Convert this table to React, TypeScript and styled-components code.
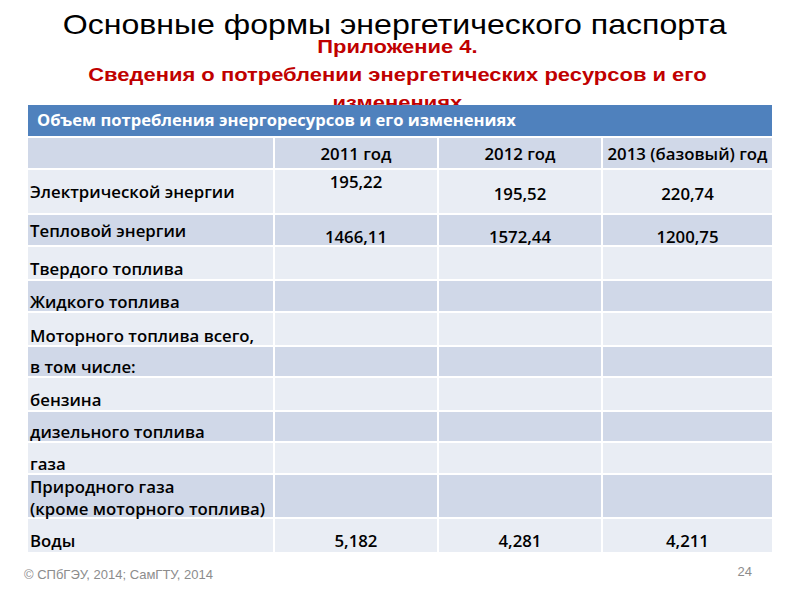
import styled, { createGlobalStyle } from 'styled-components';

const GlobalStyle = createGlobalStyle`
  html, body {
    margin: 0;
    padding: 0;
    background: #ffffff;
  }
`;

const Slide = styled.div`
  width: 800px;
  height: 600px;
  overflow: hidden;
  display: flex;
  flex-direction: column;
  background: #ffffff;
  font-family: 'Liberation Sans', Arial, sans-serif;
`;

const Heading = styled.div`
  box-sizing: border-box;
  height: 105px;
  padding-top: 9px;
  display: flex;
  flex-direction: column;
  align-items: center;
`;

const Title = styled.h1`
  margin: 0 11px 0 0;
  font-size: 28px;
  line-height: 32px;
  font-weight: 400;
  color: #000000;
  white-space: nowrap;
  transform: scaleX(1.146);
`;

const Subtitle = styled.div`
  margin: -8px 5px 0 0;
  font-size: 18px;
  line-height: 28px;
  font-weight: 700;
  color: #c00000;
  text-align: center;
  white-space: nowrap;
  transform: scaleX(1.22);
`;

const Table = styled.div`
  position: relative;
  z-index: 1;
  margin-left: 28px;
  width: 744px;
  display: grid;
  grid-template-columns: 245px 162px 162px 169px;
  gap: 2px;
  font-family: 'Open Sans', 'Noto Sans', sans-serif;
  font-weight: 600;
  font-size: 16.8px;
  line-height: 22px;
  color: #000000;
`;

const HeaderCell = styled.div`
  grid-column: 1 / -1;
  box-sizing: border-box;
  height: 31px;
  padding: 4px 9px 0;
  background: #4f81bd;
  color: #ffffff;
  font-weight: 700;
  font-size: 16.6px;
  white-space: nowrap;
`;

const Cell = styled.div<{ $h: number; $top: number; $dark: boolean; $first?: boolean }>`
  box-sizing: border-box;
  height: ${(p) => p.$h}px;
  padding-top: ${(p) => p.$top}px;
  padding-left: ${(p) => (p.$first ? 2 : 0)}px;
  background: ${(p) => (p.$dark ? '#d0d8e8' : '#e9edf4')};
  text-align: ${(p) => (p.$first ? 'left' : 'center')};
  white-space: nowrap;
`;

const Footer = styled.div`
  display: flex;
  justify-content: space-between;
  padding: 15px 48px 0 24px;
  color: #8c8c8c;
`;

const Copyright = styled.span`
  font-size: 13px;
  line-height: 16px;
`;

const PageNumber = styled.span`
  font-size: 13px;
  line-height: 16px;
  margin-top: -3px;
`;

interface Row {
  label: React.ReactNode;
  values: string[];
  h: number;
  labelTop: number;
  valueTops: number[];
}

const rows: Row[] = [
  { label: '', values: ['2011 год', '2012 год', '2013 (базовый) год'], h: 30, labelTop: 5, valueTops: [5, 5, 5] },
  { label: 'Электрической энергии', values: ['195,22', '195,52', '220,74'], h: 43, labelTop: 11, valueTops: [1, 13, 13] },
  { label: 'Тепловой энергии', values: ['1466,11', '1572,44', '1200,75'], h: 30, labelTop: 5, valueTops: [11, 11, 11] },
  { label: 'Твердого топлива', values: ['', '', ''], h: 32, labelTop: 11, valueTops: [0, 0, 0] },
  { label: 'Жидкого топлива', values: ['', '', ''], h: 30, labelTop: 10, valueTops: [0, 0, 0] },
  { label: 'Моторного топлива всего,', values: ['', '', ''], h: 32, labelTop: 12, valueTops: [0, 0, 0] },
  { label: 'в том числе:', values: ['', '', ''], h: 29, labelTop: 9, valueTops: [0, 0, 0] },
  { label: 'бензина', values: ['', '', ''], h: 32, labelTop: 11, valueTops: [0, 0, 0] },
  { label: 'дизельного топлива', values: ['', '', ''], h: 29, labelTop: 9, valueTops: [0, 0, 0] },
  { label: 'газа', values: ['', '', ''], h: 30, labelTop: 10, valueTops: [0, 0, 0] },
  {
    label: (
      <>
        Природного газа
        <br />
        (кроме моторного топлива)
      </>
    ),
    values: ['', '', ''],
    h: 42,
    labelTop: 1,
    valueTops: [0, 0, 0],
  },
  { label: 'Воды', values: ['5,182', '4,281', '4,211'], h: 33, labelTop: 11, valueTops: [11, 11, 11] },
];

const App = () => {
  return (
    <Slide>
      <GlobalStyle />
      <Heading>
        <Title>Основные формы энергетического паспорта</Title>
        <Subtitle>
          Приложение 4.
          <br />
          Сведения о потреблении энергетических ресурсов и его
          <br />
          изменениях
        </Subtitle>
      </Heading>
      <Table>
        <HeaderCell>Объем потребления энергоресурсов и его изменениях</HeaderCell>
        {rows.map((row, i) => {
          const dark = i % 2 === 0;
          return [
            <Cell key={`l${i}`} $h={row.h} $top={row.labelTop} $dark={dark} $first>
              {row.label}
            </Cell>,
            ...row.values.map((v, j) => (
              <Cell key={`v${i}-${j}`} $h={row.h} $top={row.valueTops[j]} $dark={dark}>
                {v}
              </Cell>
            )),
          ];
        })}
      </Table>
      <Footer>
        <Copyright>© СПбГЭУ, 2014; СамГТУ, 2014</Copyright>
        <PageNumber>24</PageNumber>
      </Footer>
    </Slide>
  );
};

export default App;
